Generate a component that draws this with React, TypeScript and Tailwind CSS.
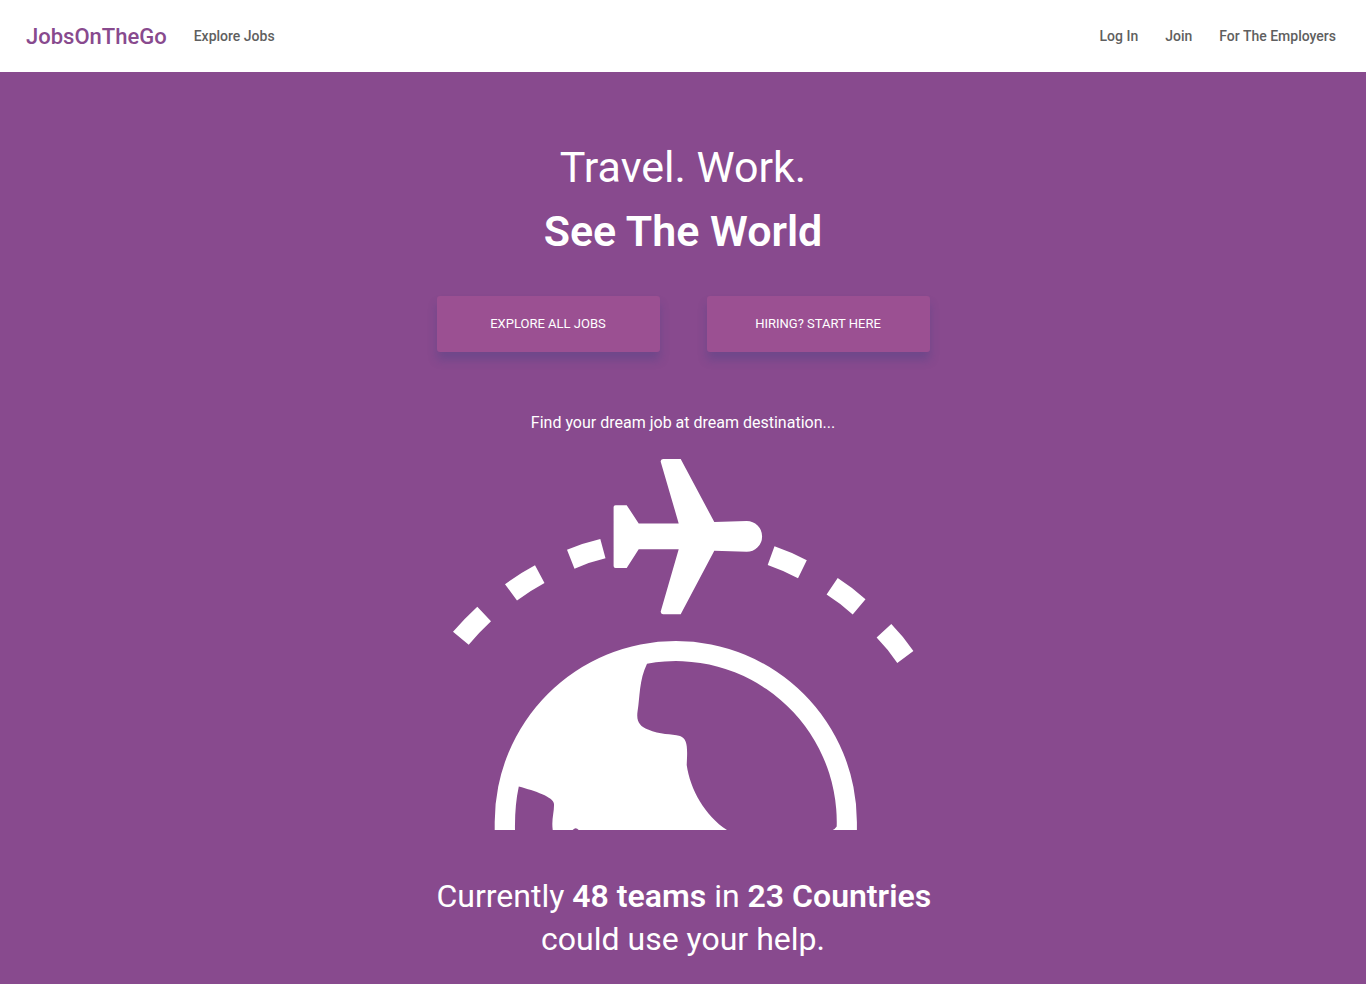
const navLink = "text-sm font-medium text-[#5f5f5f]";
const cta =
  "flex h-14 flex-1 items-center justify-center rounded-[3px] bg-[#9b5092] text-[13px] text-white uppercase shadow-[0_8px_10px_rgba(60,66,130,0.32)]";

function GlobeTrip() {
  return (
    <svg viewBox="437 450 493 381" className="block w-full" role="img" aria-label="Plane flying over a globe">
      <g fill="#ffffff">
        <path d="M453 631.7Q464.500 618.500 477.300 606.700L491 621.300Q479 632.500 468.700 644.700Z" />
        <path d="M505 584.300Q519.500 573.500 535 565.300L544.500 583Q530.500 590.500 517 600.500Z" />
        <path d="M567 549.800Q583 543 600.300 539L605.500 558.300Q589.500 562 574.500 568.700Z" />
        <path d="M774.500 546.300Q791 552 806.800 560.200L798 578.200Q783.500 570.500 767.700 565Z" />
        <path d="M837.700 578Q852.500 587.500 865.500 599.200L852.700 614.400Q840.500 603.500 826.600 594.600Z" />
        <path d="M891.300 624Q903.500 636.500 913.400 651L897.300 663Q888 649 876.600 637.400Z" />
        <path d="M663 459H680.700L714.300 522L746.700 521A15.400 15.400 0 0 1 762.100 536.400A15.400 15.400 0 0 1 746.700 551.800L714.300 550.700L680.700 614.200H663Q660.500 614 660.700 611.500L678.700 549.200H638.700L626.700 568H615.500Q613.600 567.800 613.600 566V507Q613.600 505.300 615.500 505.200H626.700L638.700 523.400H678.700L660.700 461.700Q660.500 459.300 663 459Z" />
        <path
          fillRule="evenodd"
          d="M494.700 830V822A181.100 181.100 0 0 1 856.900 822V830H832.700Q835 829 836.700 826.500A161 161 0 0 0 647 663.700C639 680 640 697 637.600 711C636 722 640 726 648 729.500C660 735 671 733.500 680 736C688 739 687.500 748 686.700 765C690 789 705 816 727 830H578.700Q575.700 826.500 572.700 830H552.700C551.300 819 554.300 812 554 804C553.500 797 535 791 518.800 786.600Q514.600 806 515 830Z"
        />
      </g>
    </svg>
  );
}

export default function App() {
  return (
    <div className="flex min-h-screen flex-col bg-[#884a8e] font-[Roboto,sans-serif]">
      <header className="flex h-18 items-center justify-between bg-white pr-[30px] pl-[26px]">
        <div className="flex items-center gap-[27px]">
          <a href="#home" className="text-[22px] font-medium text-[#884a8e]">
            JobsOnTheGo
          </a>
          <a href="#jobs" className={navLink}>
            Explore Jobs
          </a>
        </div>
        <nav className="flex items-center gap-[27px]">
          <a href="#login" className={navLink}>
            Log In
          </a>
          <a href="#join" className={navLink}>
            Join
          </a>
          <a href="#employers" className={navLink}>
            For The Employers
          </a>
        </nav>
      </header>
      <main className="mx-auto flex w-full max-w-[493px] flex-col pt-[63px] pb-6 text-center text-white">
        <h1 className="text-[43px] leading-16">
          Travel. Work.
          <br />
          <strong className="font-semibold">See The World</strong>
        </h1>
        <div className="mt-[33px] flex gap-[47px]">
          <button type="button" className={cta}>
            Explore all jobs
          </button>
          <button type="button" className={cta}>
            Hiring? Start here
          </button>
        </div>
        <p className="mt-[59px] mb-[15px] text-base">Find your dream job at dream destination...</p>
        <GlobeTrip />
        <p className="mt-11 text-[32px] leading-[43px] whitespace-nowrap">
          Currently <strong className="font-semibold">48 teams</strong> in{" "}
          <strong className="font-semibold">23 Countries</strong>
          <br />
          could use your help.
        </p>
      </main>
    </div>
  );
}
